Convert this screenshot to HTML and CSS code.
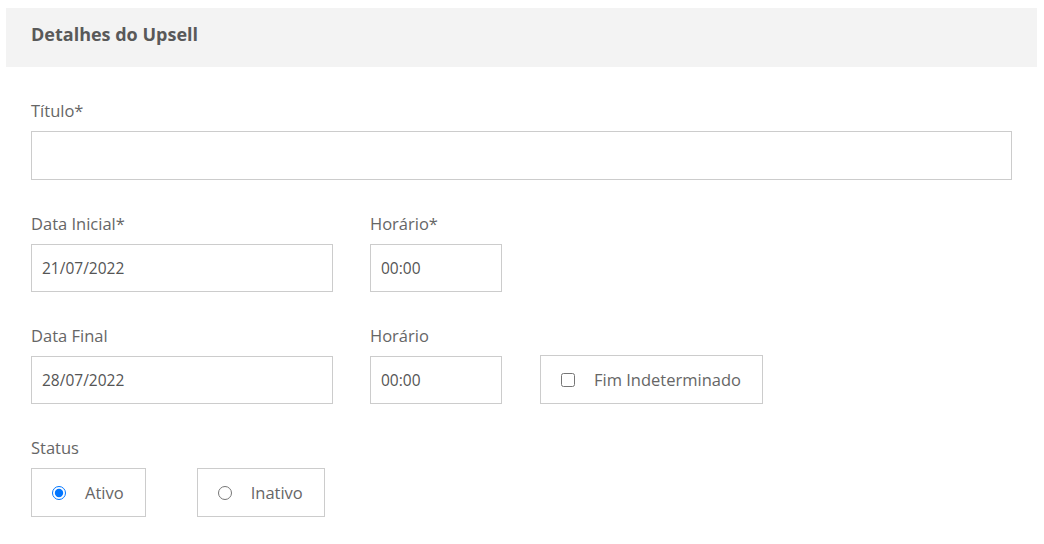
FILE: index.html
```html
<!DOCTYPE html>
<html lang="pt-BR">
<head>
  <meta charset="UTF-8">
  <meta name="viewport" content="width=device-width, initial-scale=1.0">
  <title>Detalhes do Upsell</title>
  <link rel="stylesheet" href="styles.css">
</head>
<body>
  <div class="panel">
    <div class="panel-header">
      <h2 class="panel-title">Detalhes do Upsell</h2>
    </div>

    <div class="panel-body">
      <div class="form-group">
        <label class="form-label">Título*</label>
        <input type="text" class="form-input input-full">
      </div>

      <div class="form-row">
        <div class="form-group">
          <label class="form-label">Data Inicial*</label>
          <input type="text" class="form-input input-date" value="21/07/2022">
        </div>
        <div class="form-group">
          <label class="form-label">Horário*</label>
          <input type="text" class="form-input input-time" value="00:00">
        </div>
      </div>

      <div class="form-row">
        <div class="form-group">
          <label class="form-label">Data Final</label>
          <input type="text" class="form-input input-date" value="28/07/2022">
        </div>
        <div class="form-group">
          <label class="form-label">Horário</label>
          <input type="text" class="form-input input-time" value="00:00">
        </div>
        <div class="form-group group-bottom">
          <label class="option-box">
            <input type="checkbox">
            <span>Fim Indeterminado</span>
          </label>
        </div>
      </div>

      <div class="form-group">
        <label class="form-label">Status</label>
        <div class="radio-row">
          <label class="option-box">
            <input type="radio" name="status" checked>
            <span>Ativo</span>
          </label>
          <label class="option-box">
            <input type="radio" name="status">
            <span>Inativo</span>
          </label>
        </div>
      </div>
    </div>
  </div>
</body>
</html>
```

FILE: styles.css
```css
* {
  margin: 0;
  padding: 0;
  box-sizing: border-box;
  font-family: 'Open Sans', 'Noto Sans', sans-serif;
}

body {
  background-color: #fff;
  color: #666;
  padding: 8px 7px 0 6px;
}

.panel-header {
  background-color: #f3f3f3;
  height: 59px;
  padding: 0 25px 7px;
  display: flex;
  align-items: center;
}

.panel-title {
  font-size: 18px;
  font-weight: 700;
  color: #595959;
}

.panel-body {
  padding: 32px 25px 0;
}

.form-group {
  margin-bottom: 32px;
}

.form-label {
  display: block;
  height: 24px;
  line-height: 24px;
  font-size: 16.5px;
  color: #666;
  margin-bottom: 8px;
}

.form-input {
  display: block;
  height: 48px;
  border: 1px solid #ccc;
  background-color: #fff;
  padding: 0 10px;
  font-size: 15.5px;
  color: #555;
  outline: none;
}

.input-full {
  width: 100%;
  height: 49px;
}

.input-date {
  width: 302px;
}

.input-time {
  width: 132px;
}

.form-row {
  display: flex;
  gap: 37px;
}

.form-row .form-group:nth-child(3) {
  margin-left: 1px;
}

.group-bottom {
  display: flex;
  align-items: flex-end;
}

.option-box {
  display: flex;
  align-items: center;
  height: 49px;
  border: 1px solid #ccc;
  padding: 0 21px 0 20px;
  gap: 19px;
  font-size: 16.5px;
  color: #666;
  cursor: pointer;
}

.option-box input {
  width: 14px;
  height: 14px;
  margin: 0;
}

.radio-row {
  display: flex;
  gap: 51px;
}
```
